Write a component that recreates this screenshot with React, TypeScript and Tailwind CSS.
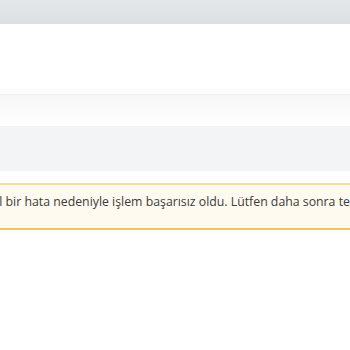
export default function App() {
  return (
    <div className="h-[350px] w-[350px] overflow-hidden bg-white font-['Open_Sans',sans-serif]">
      <div className="h-6 bg-gradient-to-b from-[#e5e8eb] to-[#dcdfe2]" />
      <div className="h-[65px] bg-white" />
      <div className="h-[5px] border-t border-[#fafafa] bg-[#fcfcfc]" />
      <div className="h-[32px] border-t border-[#efefef] bg-gradient-to-b from-[#f6f6f6] to-white" />
      <div className="h-[45px] bg-[#f3f4f6]" />
      <div className="h-3 bg-white" />
      <div className="h-[47px] overflow-hidden whitespace-nowrap border-t-2 border-b-2 border-t-[#f7dcaa] border-b-[#f2c55c] bg-[#fffaf0] pt-[7px]">
        <p className="ml-[-31px] text-[12.3px] leading-5 text-[#3a3a3a]">
          Genel bir hata nedeniyle işlem başarısız oldu. Lütfen daha sonra tekrar deneyiniz.
        </p>
      </div>
      <div className="h-[6px] bg-gradient-to-b from-[#fbfbfb] to-white" />
    </div>
  );
}
